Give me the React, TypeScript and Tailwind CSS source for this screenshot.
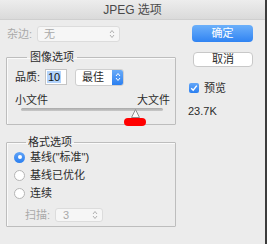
const UpDown = ({ color = "#8a8a8a" }: { color?: string }) => (
  <svg width="6" height="10" viewBox="0 0 6 10" fill="none">
    <path d="M1 4 L3 1.5 L5 4" stroke={color} strokeWidth="1" />
    <path d="M1 6 L3 8.5 L5 6" stroke={color} strokeWidth="1" />
  </svg>
);

function Radio({ checked, label }: { checked?: boolean; label: string }) {
  return (
    <div className="flex items-center h-[12px]">
      {checked ? (
        <div className="w-[11px] h-[11px] rounded-full bg-gradient-to-b from-[#5fa3f7] to-[#2a7ff0] flex items-center justify-center">
          <div className="w-[4px] h-[4px] rounded-full bg-white" />
        </div>
      ) : (
        <div className="w-[11px] h-[11px] rounded-full bg-white border border-[#b5b5b5]" />
      )}
      <span className="ml-[5px] text-[11px] text-[#2b2b2b]">{label}</span>
    </div>
  );
}

export default function App() {
  return (
    <div
      className="w-[267px] h-[244px] bg-[#ececec] flex flex-col border-r-2 border-[#3c3c3c] overflow-hidden"
      style={{ fontFamily: '"Liberation Sans", "Noto Sans CJK SC", sans-serif' }}
    >
      {/* title bar */}
      <div className="h-[20px] shrink-0 border-b border-[#cfcfcf] bg-gradient-to-b from-[#ededed] to-[#dadada] flex items-center justify-center text-[12px] text-[#4a4a4a]">
        JPEG 选项
      </div>

      <div className="flex flex-1">
        {/* left column */}
        <div className="w-[178px] pl-[6px] pt-[6px]">
          <div className="flex items-center h-[16px]">
            <span className="w-[31px] pl-[1px] text-[11px] text-[#a9a9a9]">杂边:</span>
            <div className="w-[83px] h-[16px] bg-[#f6f6f6] border border-[#dcdcdc] rounded-[3px] flex items-center justify-between pl-[6px] pr-[4px]">
              <span className="text-[11px] text-[#a9a9a9]">无</span>
              <UpDown color="#b0b0b0" />
            </div>
          </div>

          <fieldset className="mt-[9px] w-[170px] h-[74px] border border-[#bdbdbd] shadow-[inset_1px_1px_0_#fafafa] rounded-[1px] pl-[8px] pr-[3px]">
            <legend className="ml-[12px] px-[3px] text-[11px] leading-[13px] text-[#2b2b2b]">图像选项</legend>
            <div className="flex items-center mt-[4px] h-[18px]">
              <span className="w-[30px] text-[11px] text-[#2b2b2b]">品质:</span>
              <div className="w-[22px] h-[16px] bg-white border border-[#c4c4c4] flex items-center pl-[1px]">
                <span className="text-[11px] leading-[12px] bg-[#b3d3fb] text-[#111] px-[1px]">10</span>
              </div>
              <div className="ml-[8px] w-[49px] h-[17px] bg-white border border-[#cfcfcf] rounded-[3px] flex items-center justify-between pl-[6px] overflow-hidden">
                <span className="text-[11px] text-[#2b2b2b]">最佳</span>
                <div className="w-[11px] h-full bg-gradient-to-b from-[#69abf8] to-[#2a7ff0] flex items-center justify-center">
                  <UpDown color="#ffffff" />
                </div>
              </div>
            </div>
            <div className="flex justify-between mt-[8px] pr-[2px] text-[11px] leading-[12px] text-[#2b2b2b]">
              <span>小文件</span>
              <span>大文件</span>
            </div>
            <div className="relative ml-[6px] w-[142px] mt-[2px] h-[10px]">
              <div className="mt-[2px] h-[3px] rounded-full bg-gradient-to-b from-[#a9a9a9] to-[#c9c9c9]" />
              <svg className="absolute left-[110px] top-[1px]" width="9" height="9" viewBox="0 0 9 9">
                <path d="M4.5 0.5 L8.5 8.5 L0.5 8.5 Z" fill="#fbfbfb" stroke="#8e8e8e" strokeWidth="1" />
              </svg>
              <div className="absolute left-[103px] top-[10px] w-[22px] h-[8px] rounded-full bg-[#f00]" />
            </div>
          </fieldset>

          <fieldset className="mt-[11px] w-[170px] h-[91px] border border-[#bdbdbd] shadow-[inset_1px_1px_0_#fafafa] rounded-[1px] pl-[7px]">
            <legend className="ml-[12px] px-[2px] text-[11px] leading-[13px] text-[#2b2b2b]">格式选项</legend>
            <div className="flex flex-col gap-[6px] mt-[2px]">
              <Radio checked label={'基线("标准")'} />
              <Radio label="基线已优化" />
              <Radio label="连续" />
            </div>
            <div className="flex items-center mt-[9px] pl-[11px] h-[14px]">
              <span className="w-[30px] text-[11px] text-[#a9a9a9]">扫描:</span>
              <div className="w-[48px] h-[14px] bg-[#f6f6f6] border border-[#dcdcdc] rounded-[3px] flex items-center justify-between pl-[7px] pr-[4px]">
                <span className="text-[11px] text-[#a9a9a9]">3</span>
                <UpDown color="#b0b0b0" />
              </div>
            </div>
          </fieldset>
        </div>

        {/* right column */}
        <div className="flex-1 pl-[9px] pt-[5px]">
          <div className="ml-[5px] w-[61px] h-[17px] rounded-[4px] bg-gradient-to-b from-[#6cb0fa] to-[#2f83f2] flex items-center justify-center text-[11px] text-white">
            确定
          </div>
          <div className="ml-[6px] mt-[10px] w-[60px] h-[15px] rounded-[4px] bg-white border border-[#c8c8c8] flex items-center justify-center text-[11px] text-[#2b2b2b]">
            取消
          </div>
          <div className="flex items-center mt-[13px] ml-[2px]">
            <div className="w-[10px] h-[10px] rounded-[2px] bg-gradient-to-b from-[#62a6f8] to-[#2a7ff0] flex items-center justify-center">
              <svg width="8" height="8" viewBox="0 0 8 8" fill="none">
                <path d="M1.2 4.2 L3.2 6.2 L6.8 1.6" stroke="#fff" strokeWidth="1.4" />
              </svg>
            </div>
            <span className="ml-[5px] text-[11px] text-[#2b2b2b]">预览</span>
          </div>
          <div className="mt-[6px] ml-[1px] text-[11px] text-[#2b2b2b]">23.7K</div>
        </div>
      </div>
    </div>
  );
}
